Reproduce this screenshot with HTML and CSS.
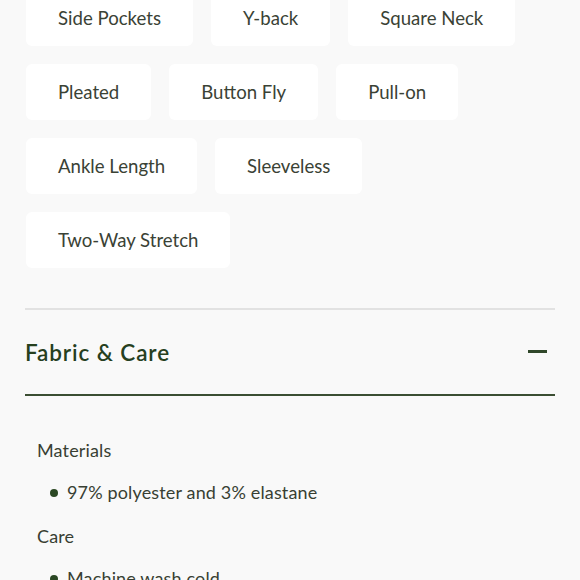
FILE: index.html
```html
<!DOCTYPE html>
<html lang="en">
<head>
<meta charset="utf-8">
<title>Product details</title>
<link rel="stylesheet" href="styles.css">
</head>
<body>
<main class="page">
  <ul class="chips">
    <li class="chip">Side Pockets</li>
    <li class="chip">Y-back</li>
    <li class="chip">Square Neck</li>
    <li class="chip">Pleated</li>
    <li class="chip">Button Fly</li>
    <li class="chip">Pull-on</li>
    <li class="chip">Ankle Length</li>
    <li class="chip">Sleeveless</li>
    <li class="chip">Two-Way Stretch</li>
  </ul>

  <section class="accordion">
    <div class="acc-header">
      <h2 class="acc-title">Fabric &amp; Care</h2>
      <span class="acc-icon" aria-hidden="true"></span>
    </div>
    <div class="acc-body">
      <h3 class="label">Materials</h3>
      <ul class="bullets">
        <li>97% polyester and 3% elastane</li>
      </ul>
      <h3 class="label">Care</h3>
      <ul class="bullets">
        <li>Machine wash cold</li>
      </ul>
    </div>
  </section>
</main>
</body>
</html>
```

FILE: styles.css
```css
* { box-sizing: border-box; }
html, body { margin: 0; padding: 0; background: #f9f9f9; }
body {
  font-family: Lato, "Noto Sans", "Liberation Sans", sans-serif;
  color: #383f33;
  overflow: hidden;
}
.page {
  padding: 0 25px;
  margin-top: -10px;
}
.chips {
  list-style: none;
  margin: 0;
  padding: 0 0 0 1px;
  display: flex;
  flex-wrap: wrap;
  gap: 18px 18px;
}
.chip {
  height: 56px;
  padding: 0 32px;
  display: flex;
  align-items: center;
  background: #ffffff;
  border-radius: 6px;
  font-size: 18.6px;
  color: #3a4235;
  white-space: nowrap;
}
.accordion {
  margin-top: 40px;
  border-top: 2px solid #e2e2e2;
}
.acc-header {
  height: 86px;
  display: flex;
  align-items: center;
  justify-content: space-between;
  border-bottom: 2px solid #3b4e33;
}
.acc-title {
  margin: 0;
  font-size: 22.5px;
  font-weight: 600;
  letter-spacing: 0.9px;
  color: #26401f;
}
.acc-icon {
  width: 19px;
  height: 3px;
  background: #30472a;
  margin-right: 8px;
  margin-top: -2px;
}
.acc-body {
  padding: 41px 0 0 12px;
}
.label {
  margin: 0 0 16px;
  font-size: 18px;
  font-weight: 400;
  letter-spacing: 0.15px;
  line-height: 26px;
  color: #383f33;
}
.bullets {
  list-style: none;
  margin: 0 0 18px;
  padding: 0 0 0 30px;
}
.bullets li {
  position: relative;
  font-size: 18px;
  letter-spacing: 0.15px;
  line-height: 26px;
  color: #383f33;
}
.bullets li::before {
  content: "";
  position: absolute;
  left: -17px;
  top: 10px;
  width: 8px;
  height: 8px;
  border-radius: 50%;
  background: #2b4824;
}
```
